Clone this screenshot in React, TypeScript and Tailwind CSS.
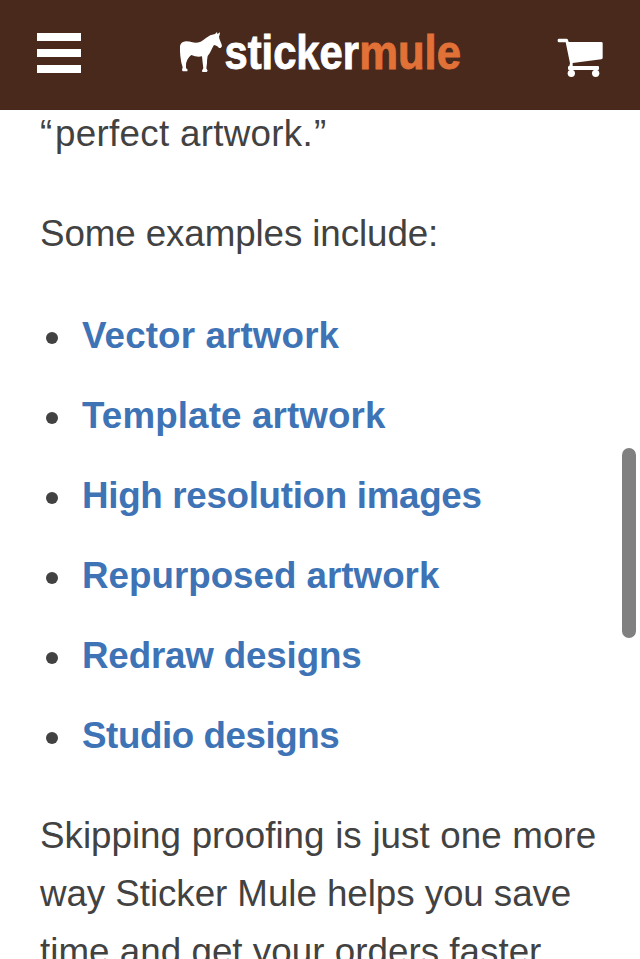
import React from "react";

const links = [
  { label: "Vector artwork", tracking: "tracking-[0.13px]" },
  { label: "Template artwork", tracking: "tracking-[0.12px]" },
  { label: "High resolution images", tracking: "tracking-[-0.31px]" },
  { label: "Repurposed artwork", tracking: "tracking-[0px]" },
  { label: "Redraw designs", tracking: "tracking-[-0.17px]" },
  { label: "Studio designs", tracking: "tracking-[-0.43px]" },
];

function Logo() {
  return (
    <svg width="290" height="60" viewBox="175 22 290 60" className="block" role="img" aria-label="stickermule">
      <g transform="translate(176 28) scale(0.33333)">
        <path
          fill="#fff"
          d="M12 54 Q15 41 30 40 Q40 40 49 43 Q62 46 74 41 Q82 36 90 30 Q102 20 117 18 L123 12 L124 18 L132 13 L131 20 L129 26 Q130 34 134 42 Q138 50 138 55 L134 60 L129 60 L126 56 Q119 51 114 51 Q110 57 106 66 Q102 76 95 84 Q93 94 93 106 L91 121 L95 128 L92 132 L79 132 L78 128 L82 120 L80 104 L78 85 Q62 88 46 81 Q38 87 34 95 Q30 103 30 112 L30 120 L35 125 L34 130 L20 130 L18 126 L20 118 L16 104 L13 84 L12 70 Z"
        />
      </g>
      <g fontFamily="'Liberation Sans', Arial, sans-serif" fontWeight="700" fontSize="47.5" strokeWidth="0.9">
        <text x="224.5" y="68.5" fill="#fff" stroke="#fff" textLength="134.5" lengthAdjust="spacingAndGlyphs">sticker</text>
        <text x="359.2" y="68.5" fill="#e27137" stroke="#e27137" textLength="101.8" lengthAdjust="spacingAndGlyphs">mule</text>
      </g>
    </svg>
  );
}

function Cart() {
  return (
    <svg width="46" height="40" viewBox="557 38 46 40" className="block" role="img" aria-label="Cart">
      <g transform="translate(540 20) scale(0.33333)" fill="#fff">
        <path d="M57 56 H80 Q83 56 84 60 L86 66 H184 Q188 66 188 70 V114 Q188 117 184 118 L98 129 V138 H174 Q177 138 177 141 V147 Q177 150 174 150 H88 Q84 150 84 147 V141 Q84 138 88 138 L90 130 L77 67 H57 Q53 67 53 63 V60 Q53 56 57 56 Z" />
        <circle cx="94" cy="160" r="11" />
        <circle cx="167" cy="160" r="11" />
      </g>
    </svg>
  );
}

export default function App() {
  return (
    <div className="relative flex h-[959px] w-[640px] flex-col overflow-hidden bg-white font-['Liberation_Sans',Arial,sans-serif] text-[36.75px] leading-[58px] text-[#424242]">
      <header className="z-10 flex h-[110px] shrink-0 items-start justify-between bg-[#48291c] pr-[37px] pl-[37px]">
        <button className="mt-[33px] flex w-[44px] flex-col gap-2" aria-label="Menu">
          <span className="h-2 w-full bg-white" />
          <span className="h-2 w-full bg-white" />
          <span className="h-2 w-full bg-white" />
        </button>
        <div className="mt-[22px] mr-[-1px]"><Logo /></div>
        <div className="mt-[38px]"><Cart /></div>
      </header>
      <main className="-mt-[5px] px-10 whitespace-nowrap">
        <p className="tracking-[0.3px]"><span className="tracking-[2.7px]">“</span>perfect artwork<span className="tracking-[1.3px]">.</span>”</p>
        <p className="mt-[42px] tracking-[-0.1px]">Some examples include:</p>
        <ul className="mt-[44px] flex flex-col gap-[22px]">
          {links.map((l) => (
            <li key={l.label} className="flex items-center">
              <span className="mt-[4px] mr-[24px] ml-[6px] h-3 w-3 rounded-full bg-[#424242]" />
              <a className={`font-bold text-[#3e73b5] ${l.tracking}`}>{l.label}</a>
            </li>
          ))}
        </ul>
        <p className="mt-[42px]">
          <span className="block [word-spacing:0.5px]">Skipping proofing is just one more</span>
          <span className="block tracking-[-0.06px]">way Sticker Mule helps you save</span>
          <span className="block tracking-[0.03px]">time and get your orders faster</span>
        </p>
      </main>
      <div className="absolute top-[448px] right-[4px] h-[190px] w-[14px] rounded-full bg-[#808080]" />
    </div>
  );
}
